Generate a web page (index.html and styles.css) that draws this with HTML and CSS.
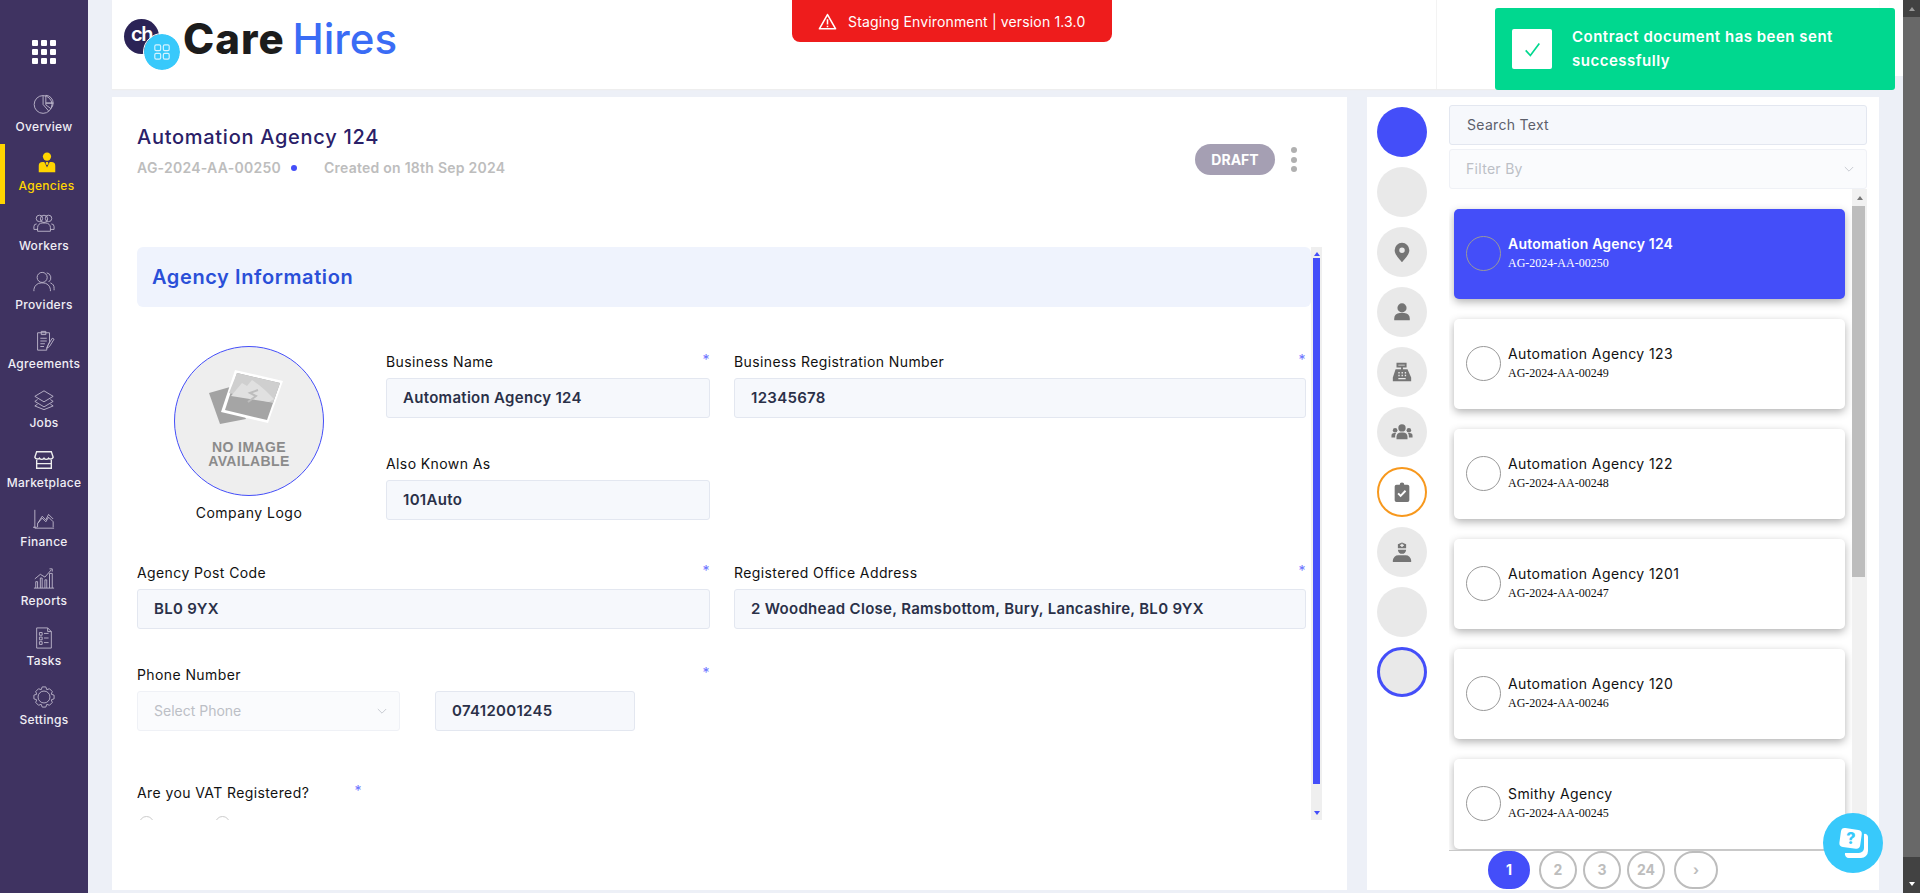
FILE: index.html
```html
<!DOCTYPE html>
<html lang="en">
<head>
    <meta charset="UTF-8">
    <title>Care Hires</title>
    <link rel="stylesheet" href="styles.css">
</head>
<body>
    <nav class="sidebar">
        <div class="apps-grid">
            <i></i><i></i><i></i><i></i><i></i><i></i><i></i><i></i><i></i>
        </div>
        <a class="nav-item">
            <svg viewBox="0 0 24 24"><circle cx="11" cy="12.500" r="9.700"/><path d="M14 2.500a8.500 8.500 0 0 1 8 8.500h-8zM14 11h8a8.500 8.500 0 0 1-2.500 6L14 13zM11 3v9.500l6 7"/></svg>
            <span>Overview</span>
        </a>
        <a class="nav-item active">
            <svg viewBox="0 0 24 24" class="filled"><circle cx="12" cy="5" r="4.500"/><path d="M3 22v-7a4 4 0 0 1 4-4h2l3 6 3-6h2a4 4 0 0 1 4 4v7z"/><path d="M11 11h2l.6 2-.6 1h-2l-.6-1z"/></svg>
            <span>Agencies</span>
        </a>
        <a class="nav-item">
            <svg viewBox="0 0 24 24"><circle cx="7" cy="7" r="3.500"/><circle cx="17" cy="7" r="3.500"/><circle cx="12" cy="7.500" r="4"/><path d="M4 13a3 3 0 0 0-3 3v3h4M20 13a3 3 0 0 1 3 3v3h-4M5 21v-4a5 5 0 0 1 5-5h4a5 5 0 0 1 5 5v4z"/></svg>
            <span>Workers</span>
        </a>
        <a class="nav-item">
            <svg viewBox="0 0 24 24"><circle cx="10" cy="7" r="5.500"/><path d="M1 22v-2a8 8 0 0 1 8-7h2a8 8 0 0 1 8 7v2M15 2a5.500 5.500 0 0 1 2 10M19 13a6 6 0 0 1 4 6v2"/></svg>
            <span>Providers</span>
        </a>
        <a class="nav-item">
            <svg viewBox="0 0 24 24"><path d="M5 3h13v10l-3 7v2H5zM9 1.500h5V5H9zM8 9h7M8 12h7M8 15h5M8 18h4M21 9l-5 8-1 3 3-2 5-8z"/></svg>
            <span>Agreements</span>
        </a>
        <a class="nav-item">
            <svg viewBox="0 0 24 24"><path d="M12 2l10 6-10 6L2 8zM5 11.500l-3 2 10 6 10-6-3-2M5 16.500l-3 2 10 4 10-4-3-2"/></svg>
            <span>Jobs</span>
        </a>
        <a class="nav-item">
            <svg viewBox="0 0 24 24" class="thick"><path d="M4 3h16l2 6a3 3 0 0 1-5 1 3 3 0 0 1-5 0 3 3 0 0 1-5 0 3 3 0 0 1-5-1zM4 12v9h16v-9M4 16h16"/></svg>
            <span>Marketplace</span>
        </a>
        <a class="nav-item">
            <svg viewBox="0 0 24 24"><path d="M2 2v20h21M0 21h4M5 17l5-8 4 4 3-6 5 5M5 21v-4l5-6 4 4 3-5 5 5v6"/></svg>
            <span>Finance</span>
        </a>
        <a class="nav-item">
            <svg viewBox="0 0 24 24"><path d="M1 23h22M3 23v-7h2v7M8 23V12h2v11M13 23V14h2v9M18 23V7h3v16M2 13l6-5 5 3 7-8M18 2l3 0v3"/></svg>
            <span>Reports</span>
        </a>
        <a class="nav-item">
            <svg viewBox="0 0 24 24"><path d="M4 1h12l4 4v18H4zM16 1v4h4M7 6h3v3H7zM7 11h3v3H7zM7 16h3v3H7zM12 7h5M12 12h5M12 17h5"/></svg>
            <span>Tasks</span>
        </a>
        <a class="nav-item">
            <svg viewBox="0 0 24 24"><circle cx="12" cy="12" r="6.500"/><path d="M10 1h4l1 3 3-1 3 3-1 3 3 1v4l-3 1 1 3-3 3-3-1-1 3h-4l-1-3-3 1-3-3 1-3-3-1v-4l3-1-1-3 3-3 3 1z"/></svg>
            <span>Settings</span>
        </a>
    </nav>

    <div class="main">
        <header class="top-bar">
            <div class="brand-bar">
                <div class="logo">
                    <div class="logo-marks">
                        <span class="mark-dark">ch</span>
                        <span class="mark-blue">
                            <svg viewBox="0 0 20 20"><rect x="2" y="2" width="6.500" height="6.500" rx="1.500"/><rect x="11.500" y="2" width="6.500" height="6.500" rx="1.500"/><rect x="2" y="11.500" width="6.500" height="6.500" rx="1.500"/><rect x="11.500" y="11.500" width="6.500" height="6.500" rx="1.500"/></svg>
                        </span>
                    </div>
                    <span class="logo-text"><b>Care</b> <em>Hires</em></span>
                </div>
                <div class="env-banner">
                    <svg viewBox="0 0 24 22"><path d="M12 2L1.500 20.500h21z"/><path d="M12 8v7M12 16.500v2"/></svg>
                    <span>Staging Environment | version 1.3.0</span>
                </div>
                <div class="bar-divider"></div>
            </div>
            <div class="bar-end"></div>
            <div class="toast">
                <div class="toast-check">
                    <svg viewBox="0 0 20 20"><path d="M2 11l5.500 6L18 3"/></svg>
                </div>
                <p>Contract document has been sent successfully</p>
            </div>
        </header>

        <div class="content">
            <section class="detail-panel">
                <div class="detail-head">
                    <div>
                        <h1>Automation Agency 124</h1>
                        <div class="detail-meta">
                            <span>AG-2024-AA-00250</span>
                            <i class="meta-dot"></i>
                            <span>Created on 18th Sep 2024</span>
                        </div>
                    </div>
                    <div class="detail-actions">
                        <span class="status-pill">DRAFT</span>
                        <div class="more-dots"><i></i><i></i><i></i></div>
                    </div>
                </div>

                <div class="form-scroll">
                    <h2 class="section-title">Agency Information</h2>

                    <div class="form-row first-row">
                        <div class="logo-cell">
                            <div class="logo-col">
                                <div class="logo-circle">
                                    <svg viewBox="0 0 76 56">
                                        <path class="photo-back" d="M1 24l21-6 16 32-26 5z"/>
                                        <path class="photo-frame" d="M27 1l48 11-15 42-47-11z"/>
                                        <path class="photo-band" d="M29 4l43 10-13 37-42-10z"/>
                                        <path class="photo-sky" d="M29 4l43 10-7 20-44-10z"/>
                                        <path class="photo-hill" d="M23 27l11-13 5 3 5-6 7 5 7 6 8 8-5 3z"/>
                                        <path class="photo-road" d="M40 33l8-6-6-3 8-3" />
                                    </svg>
                                    <div class="no-image">NO IMAGE<br>AVAILABLE</div>
                                </div>
                                <div class="logo-caption">Company Logo</div>
                            </div>
                            <div class="logo-fields">
                                <div class="field">
                                    <label>Business Name <s>*</s></label>
                                    <div class="input">Automation Agency 124</div>
                                </div>
                                <div class="field">
                                    <label>Also Known As</label>
                                    <div class="input">101Auto</div>
                                </div>
                            </div>
                        </div>
                        <div class="field">
                            <label>Business Registration Number <s>*</s></label>
                            <div class="input">12345678</div>
                        </div>
                    </div>

                    <div class="form-row address-row">
                        <div class="field">
                            <label>Agency Post Code <s>*</s></label>
                            <div class="input">BL0 9YX</div>
                        </div>
                        <div class="field">
                            <label>Registered Office Address <s>*</s></label>
                            <div class="input">2 Woodhead Close, Ramsbottom, Bury, Lancashire, BL0 9YX</div>
                        </div>
                    </div>

                    <div class="form-row phone-row">
                        <div class="field">
                            <label>Phone Number <s>*</s></label>
                            <div class="phone-inputs">
                                <div class="select phone-select">
                                    Select Phone
                                    <svg viewBox="0 0 12 8"><path d="M1 1l5 5 5-5"/></svg>
                                </div>
                                <div class="input phone-number">07412001245</div>
                            </div>
                        </div>
                    </div>

                    <div class="field vat-field">
                        <label>Are you VAT Registered? <s>*</s></label>
                        <div class="radios"><i></i><i></i></div>
                    </div>

                    <div class="form-scrollbar">
                        <i class="arrow-up"></i>
                        <div class="form-thumb"></div>
                        <i class="arrow-down"></i>
                    </div>
                </div>
            </section>

            <aside class="list-panel">
                <div class="step-rail">
                    <div class="step step-current"></div>
                    <div class="step"></div>
                    <div class="step">
                        <svg viewBox="0 0 24 24"><path fill-rule="evenodd" d="M12 2a8 8 0 0 0-8 8c0 5.500 8 13 8 13s8-7.500 8-13a8 8 0 0 0-8-8zm0 5a3 3 0 1 1 0 6 3 3 0 0 1 0-6z"/></svg>
                    </div>
                    <div class="step">
                        <svg viewBox="0 0 24 24"><circle cx="12" cy="7.500" r="5"/><path d="M3.500 21v-2a6 6 0 0 1 6-6h5a6 6 0 0 1 6 6v2z"/></svg>
                    </div>
                    <div class="step">
                        <svg viewBox="0 0 24 24"><path fill-rule="evenodd" d="M6 2h11v5h-4v2h5l4 9v4H2v-4l3-9h6V7H6zm2 2v1h7V4zm0 8v1.500h1.500V12zm3.500 0v1.500H13V12zm3.500 0v1.500h1.500V12zm-7 3v1.500h1.500V15zm3.500 0v1.500H13V15zm3.500 0v1.500h1.500V15zM8 18.500V20h8v-1.500z"/></svg>
                    </div>
                    <div class="step">
                        <svg viewBox="0 0 24 24"><circle cx="12" cy="7.500" r="4"/><circle cx="4.500" cy="10" r="2.500"/><circle cx="19.500" cy="10" r="2.500"/><path d="M6 20v-3a5 5 0 0 1 5-4.500h2a5 5 0 0 1 5 4.500v3zM0.500 18v-2a3 3 0 0 1 3-3h2a7 7 0 0 0-1 4v1zM23.500 18v-2a3 3 0 0 0-3-3h-2a7 7 0 0 1 1 4v1z"/></svg>
                    </div>
                    <div class="step step-pending">
                        <svg viewBox="0 0 24 24"><path fill-rule="evenodd" d="M6 4h3.500a2.500 2.500 0 0 1 5 0H18a2 2 0 0 1 2 2v15a2 2 0 0 1-2 2H6a2 2 0 0 1-2-2V6a2 2 0 0 1 2-2zm10.600 7.400l-1.500-1.500-4.600 4.800-2-2-1.500 1.500 3.500 3.500z"/></svg>
                    </div>
                    <div class="step">
                        <svg viewBox="0 0 24 24"><path fill-rule="evenodd" d="M7.500 3.500L12 1.500l4.500 2V8h-9zM11.200 3v1.200H10v1.200h1.200v1.200h1.600V5.400H14V4.200h-1.200V3z"/><path d="M7.500 9.500h9a4.500 4.500 0 0 1-9 0z"/><path d="M2 23v-2a6 6 0 0 1 6-5.500h8a6 6 0 0 1 6 5.500v2z"/></svg>
                    </div>
                    <div class="step"></div>
                    <div class="step step-selected"></div>
                </div>

                <div class="list-col">
                    <div class="search-box">Search Text</div>
                    <div class="select filter-select">
                        Filter By
                        <svg viewBox="0 0 12 8"><path d="M1 1l5 5 5-5"/></svg>
                    </div>
                    <div class="agency-list">
                        <div class="agency-card selected">
                            <i class="avatar"></i>
                            <div><h3>Automation Agency 124</h3><p>AG-2024-AA-00250</p></div>
                        </div>
                        <div class="agency-card">
                            <i class="avatar"></i>
                            <div><h3>Automation Agency 123</h3><p>AG-2024-AA-00249</p></div>
                        </div>
                        <div class="agency-card">
                            <i class="avatar"></i>
                            <div><h3>Automation Agency 122</h3><p>AG-2024-AA-00248</p></div>
                        </div>
                        <div class="agency-card">
                            <i class="avatar"></i>
                            <div><h3>Automation Agency 1201</h3><p>AG-2024-AA-00247</p></div>
                        </div>
                        <div class="agency-card">
                            <i class="avatar"></i>
                            <div><h3>Automation Agency 120</h3><p>AG-2024-AA-00246</p></div>
                        </div>
                        <div class="agency-card">
                            <i class="avatar"></i>
                            <div><h3>Smithy Agency</h3><p>AG-2024-AA-00245</p></div>
                        </div>
                        <div class="list-scrollbar">
                            <i class="arrow-up"></i>
                            <div class="list-thumb"></div>
                        </div>
                    </div>
                    <div class="pagination">
                        <span class="page current">1</span>
                        <span class="page">2</span>
                        <span class="page">3</span>
                        <span class="page">24</span>
                        <span class="page next">&rsaquo;</span>
                    </div>
                </div>
            </aside>
        </div>
    </div>

    <div class="page-scrollbar">
        <i class="arrow-up"></i>
        <div class="page-thumb"></div>
        <i class="arrow-down"></i>
    </div>

    <button class="help-btn">
        <svg viewBox="0 0 32 32">
            <path class="help-back" d="M27 7a3 3 0 0 1 4 3v14a7 7 0 0 1-7 7H12a4 4 0 0 1-4-5h14a5 5 0 0 0 5-5z"/>
            <rect class="help-front" x="3" y="2" width="21" height="19" rx="4" transform="rotate(8 14 12)"/>
            <text x="14" y="17" text-anchor="middle">?</text>
        </svg>
    </button>
</body>
</html>
```

FILE: styles.css
```css
* {
    box-sizing: border-box;
}
html, body {
    height: 100%;
}
body {
    margin: 0;
    height: 893px;
    overflow: hidden;
    display: flex;
    font-family: Inter, "Noto Sans", sans-serif;
    background-color: #edf0f7;
    color: #111;
    font-size: 14px;
}
i, em, s {
    font-style: normal;
    text-decoration: none;
}

/* left navigation */
.sidebar {
    width: 88px;
    flex: none;
    background-color: #3f3361;
    color: #f0eef5;
    padding-top: 40px;
}
.apps-grid {
    width: 24px;
    margin: 0 0 21px 32px;
    display: grid;
    grid-template-columns: repeat(3, 6px);
    gap: 3px;
}
.apps-grid i {
    height: 6px;
    background-color: #fff;
    border-radius: 1px;
}
.nav-item {
    height: 59.300px;
    display: flex;
    flex-direction: column;
    align-items: center;
    padding-top: 8px;
    font-size: 12px;
    font-weight: 500;
    letter-spacing: 0.300px;
    border-left: 5px solid transparent;
    padding-right: 5px;
}
.nav-item svg {
    width: 22px;
    height: 22px;
    flex: none;
    fill: none;
    stroke: #bdb7cc;
    stroke-width: 1;
    margin-bottom: 2px;
}
.nav-item svg.thick {
    stroke: #eee;
    stroke-width: 1.500;
}
.nav-item span {
    line-height: 20px;
    white-space: nowrap;
}
.nav-item.active {
    border-left-color: #ffd500;
    color: #ffd500;
    padding-right: 0;
}
.nav-item.active svg.filled {
    fill: #ffd500;
    stroke: none;
}

/* header */
.main {
    width: 1815px;
    flex: none;
    padding-left: 24px;
}
.top-bar {
    display: flex;
    height: 89px;
    align-items: flex-start;
    position: relative;
}
.brand-bar {
    flex: 1;
    height: 89px;
    background-color: #fff;
    box-shadow: 0 1px 1px #eee;
    position: relative;
    padding: 19px 0 0 12px;
}
.bar-end {
    width: 24px;
    height: 76px;
    background-color: #fff;
}
.bar-divider {
    position: absolute;
    left: 1324px;
    top: 0;
    bottom: 0;
    width: 1px;
    background-color: #f3f3f3;
}
.logo {
    display: flex;
    align-items: flex-start;
}
.logo-marks {
    width: 59px;
    height: 51px;
    position: relative;
    flex: none;
}
.mark-dark {
    position: absolute;
    left: 0;
    top: 0;
    width: 35px;
    height: 35px;
    border-radius: 50%;
    background-color: #2b2356;
    color: #fff;
    font-size: 20px;
    font-weight: 600;
    line-height: 30px;
    text-align: center;
    letter-spacing: -1.500px;
}
.mark-blue {
    position: absolute;
    left: 20px;
    top: 15px;
    width: 36px;
    height: 36px;
    border-radius: 50%;
    background-color: #38c9fb;
    outline: 1px solid #fff;
    display: flex;
    align-items: center;
    justify-content: center;
}
.mark-blue svg {
    width: 18px;
    height: 18px;
    fill: none;
    stroke: #d5f3ff;
    stroke-width: 1.300;
}
.logo-text {
    font-size: 42px;
    line-height: 30px;
    margin-top: 5px;
    white-space: nowrap;
}
.logo-text b {
    font-weight: 800;
    color: #1c1c1c;
    letter-spacing: 1px;
}
.logo-text em {
    font-weight: 500;
    color: #3a6cf5;
    margin-left: -4px;
}
.env-banner {
    position: absolute;
    left: 680px;
    top: 0;
    width: 320px;
    height: 42px;
    background-color: #ee1c1c;
    border-radius: 0 0 8px 8px;
    color: #fff;
    display: flex;
    align-items: center;
    padding-left: 26px;
    gap: 11px;
    font-size: 14px;
    letter-spacing: 0.150px;
}
.env-banner svg {
    width: 19px;
    height: 17px;
    fill: none;
    stroke: #fff;
    stroke-width: 2;
    stroke-linejoin: round;
}
.toast {
    position: absolute;
    left: 1383px;
    top: 8px;
    width: 400px;
    height: 82px;
    background-color: #00d88f;
    border-radius: 3px;
    display: flex;
    align-items: flex-start;
    padding: 21px 17px;
    gap: 20px;
    color: #fff;
    font-size: 15px;
    font-weight: 600;
    line-height: 24px;
    letter-spacing: 0.500px;
}
.toast-check {
    width: 40px;
    height: 40px;
    flex: none;
    background-color: #fff;
    border-radius: 2px;
    display: flex;
    align-items: center;
    justify-content: center;
}
.toast-check svg {
    width: 17px;
    height: 17px;
    fill: none;
    stroke: #00d88f;
    stroke-width: 2;
}
.toast p {
    margin: -4px 0 0;
}

/* content panels */
.content {
    display: flex;
    gap: 20px;
    margin-top: 8px;
    height: 793px;
}
.detail-panel {
    width: 1235px;
    flex: none;
    background-color: #fff;
    padding: 0 25px;
}
.detail-head {
    height: 150px;
    display: flex;
    justify-content: space-between;
    padding-top: 26px;
}
h1 {
    margin: 0;
    font-size: 20px;
    font-weight: 500;
    line-height: 28px;
    color: #2a2068;
    letter-spacing: 0.720px;
}
.detail-meta {
    display: flex;
    align-items: center;
    margin-top: 7px;
    color: #bdbdbd;
    font-size: 14px;
    font-weight: 600;
    line-height: 20px;
    letter-spacing: 0.250px;
}
.meta-dot {
    width: 6px;
    height: 6px;
    border-radius: 50%;
    background-color: #444ef9;
    margin: 0 27px 0 10px;
}
.detail-actions {
    display: flex;
    align-items: flex-start;
    gap: 16px;
    padding: 21px 25px 0 0;
}
.status-pill {
    width: 80px;
    height: 31px;
    border-radius: 16px;
    background-color: #a59fb3;
    color: #fff;
    font-weight: 700;
    line-height: 31px;
    text-align: center;
}
.more-dots {
    display: flex;
    flex-direction: column;
    gap: 3.500px;
    padding-top: 3px;
}
.more-dots i {
    width: 6px;
    height: 6px;
    border-radius: 50%;
    background-color: #b0b0b0;
}

/* form */
.form-scroll {
    width: 1185px;
    height: 573px;
    overflow: hidden;
    position: relative;
}
.section-title {
    margin: 0 11px 0 0;
    height: 60px;
    padding-left: 15px;
    background-color: #eff3fd;
    border-radius: 6px;
    color: #2a4fd8;
    font-size: 20px;
    font-weight: 600;
    line-height: 60px;
    letter-spacing: 0.600px;
}
.form-row {
    display: grid;
    grid-template-columns: 573px 572px;
    gap: 24px;
}
.first-row {
    margin-top: 45px;
}
.address-row {
    margin-top: 43px;
}
.phone-row {
    margin-top: 36px;
}
.logo-cell {
    display: flex;
    gap: 25px;
}
.logo-col {
    width: 224px;
    height: 168px;
    flex: none;
    margin-top: -6px;
    display: flex;
    flex-direction: column;
    align-items: center;
}
.logo-circle {
    width: 150px;
    height: 150px;
    flex: none;
    border-radius: 50%;
    border: 1px solid #444ef9;
    background-color: #eee;
    display: flex;
    flex-direction: column;
    align-items: center;
    padding-top: 22px;
}
.logo-circle svg {
    width: 76px;
    height: 56px;
    flex: none;
    margin-left: -6px;
}
.photo-back {
    fill: #a3a3a3;
}
.photo-frame {
    fill: #fff;
}
.photo-band {
    fill: #a5a5a5;
}
.photo-sky {
    fill: #cfcfcf;
}
.photo-hill {
    fill: #e0e0e0;
}
.photo-road {
    fill: none;
    stroke: #bdbdbd;
    stroke-width: 2;
}
.no-image {
    margin-top: 15px;
    color: #8b8b8b;
    font-family: "Liberation Sans", sans-serif;
    font-size: 14px;
    font-weight: 700;
    line-height: 14px;
    text-align: center;
    letter-spacing: 0.400px;
}
.logo-caption {
    margin-top: 7px;
    line-height: 20px;
    letter-spacing: 0.500px;
}
.logo-fields {
    width: 324px;
    display: flex;
    flex-direction: column;
    gap: 36px;
}
.field label {
    display: flex;
    justify-content: space-between;
    height: 20px;
    line-height: 20px;
    margin-bottom: 6px;
    letter-spacing: 0.400px;
}
.field label s {
    color: #6a73ff;
    line-height: 16px;
}
.input {
    height: 40px;
    padding: 0 16px;
    background-color: #f6f8fc;
    border: 1px solid #e3e7f0;
    border-radius: 3px;
    color: #2a3048;
    font-size: 15px;
    font-weight: 600;
    line-height: 38px;
    white-space: nowrap;
    letter-spacing: 0.300px;
}
.select {
    height: 40px;
    padding: 0 12px 0 16px;
    background-color: #fafbfd;
    border: 1px solid #eff1f6;
    border-radius: 3px;
    color: #bcbfc6;
    line-height: 38px;
    display: flex;
    justify-content: space-between;
    align-items: center;
}
.select svg {
    width: 10px;
    height: 7px;
    fill: none;
    stroke: #c8cbd2;
    stroke-width: 1.200;
}
.phone-inputs {
    display: flex;
    gap: 35px;
}
.phone-select {
    width: 263px;
}
.phone-number {
    width: 200px;
}
.vat-field {
    margin-top: 52px;
}
.vat-field label {
    width: 225px;
}
.radios {
    display: flex;
    gap: 61px;
    margin: 13px 0 0 2px;
}
.radios i {
    width: 15px;
    height: 15px;
    border: 1px solid #ccc;
    border-radius: 50%;
}
.form-scrollbar {
    position: absolute;
    right: 0;
    top: 0;
    bottom: 0;
    width: 11px;
    background-color: #efefef;
    display: flex;
    flex-direction: column;
    align-items: center;
    padding: 5px 0;
}
.form-thumb {
    flex: 1;
    width: 7px;
    margin: 2px 0 27px;
    background-color: #444ef9;
}
.form-scrollbar .arrow-up {
    border-bottom-color: #444ef9;
}
.form-scrollbar .arrow-down {
    border-top-color: #444ef9;
}
.arrow-up, .arrow-down {
    width: 0;
    height: 0;
    border-left: 3px solid transparent;
    border-right: 3px solid transparent;
    flex: none;
}
.arrow-up {
    border-bottom: 4px solid #777;
}
.arrow-down {
    border-top: 4px solid #777;
}

/* agencies list */
.list-panel {
    width: 512px;
    flex: none;
    background-color: #fff;
    display: flex;
    gap: 22px;
    padding: 8px 12px 0 10px;
}
.step-rail {
    width: 50px;
    flex: none;
    padding-top: 2px;
    display: flex;
    flex-direction: column;
    gap: 10px;
}
.step {
    width: 50px;
    height: 50px;
    border-radius: 50%;
    background-color: #e9e9e9;
    display: flex;
    align-items: center;
    justify-content: center;
}
.step svg {
    width: 22px;
    height: 22px;
    fill: #757575;
}
.step-current {
    background-color: #444ef9;
}
.step-pending {
    background-color: #fff;
    border: 2px solid #f7981d;
}
.step-selected {
    border: 3px solid #444ef9;
}
.list-col {
    flex: 1;
    min-width: 0;
}
.search-box {
    height: 40px;
    padding: 0 17px;
    background-color: #f6f8fc;
    border: 1px solid #e3e7f0;
    border-radius: 3px;
    color: #5c5f6b;
    line-height: 38px;
    letter-spacing: 0.300px;
}
.filter-select {
    margin-top: 4px;
    letter-spacing: 0.300px;
}
.agency-list {
    height: 662px;
    overflow: hidden;
    position: relative;
    padding: 20px 0 0 5px;
    border-bottom: 1px solid #c9c9c9;
}
.agency-card {
    width: 391px;
    height: 90px;
    margin-bottom: 20px;
    background-color: #fff;
    border-radius: 5px;
    box-shadow: 0 3px 8px rgba(0, 0, 0, 0.3);
    padding: 27px 0 0 12px;
    display: flex;
    gap: 7px;
}
.agency-card.selected {
    background-color: #444ef9;
    color: #fff;
}
.avatar {
    width: 35px;
    height: 35px;
    flex: none;
    border: 1px solid #999;
    border-radius: 50%;
}
.agency-card h3 {
    margin: 0;
    font-size: 14px;
    font-weight: 400;
    line-height: 16px;
    letter-spacing: 0.400px;
}
.agency-card.selected h3 {
    font-weight: 600;
    letter-spacing: 0.200px;
}
.agency-card p {
    margin: 3px 0 0;
    font-family: "Liberation Serif", serif;
    font-size: 12px;
    line-height: 16px;
}
.list-scrollbar {
    position: absolute;
    right: 0;
    top: 0;
    bottom: 0;
    width: 15px;
    background-color: #f1f1f1;
    display: flex;
    flex-direction: column;
    align-items: center;
    padding-top: 7px;
}
.list-thumb {
    width: 13px;
    height: 371px;
    margin-top: 6px;
    margin-left: -2px;
    background-color: #bdbdbd;
}
.pagination {
    display: flex;
    margin-left: 39px;
    gap: 6px;
}
.page {
    width: 38px;
    height: 38px;
    border: 2px solid #bdbdbd;
    border-radius: 19px;
    color: #bdbdbd;
    font-weight: 700;
    line-height: 34px;
    text-align: center;
}
.page.current {
    width: 42px;
    margin-right: 3px;
    background-color: #444ef9;
    border-color: #444ef9;
    color: #fff;
}
.page.next {
    width: 44px;
    margin-left: 3px;
}

/* window scrollbar and floating help */
.page-scrollbar {
    width: 17px;
    flex: none;
    height: 893px;
    background-color: #424242;
    display: flex;
    flex-direction: column;
    align-items: center;
    padding: 7px 0;
}
.page-scrollbar .arrow-up {
    border-bottom-color: #9a9a9a;
}
.page-scrollbar .arrow-down {
    border-top-color: #fff;
}
.page-thumb {
    flex: 1;
    width: 17px;
    margin: 6px 0 25px;
    background-color: #686868;
}
.help-btn {
    position: absolute;
    left: 1823px;
    top: 813px;
    width: 60px;
    height: 60px;
    padding: 0;
    border: 0;
    border-radius: 50%;
    background-color: #38c9fb;
    display: flex;
    align-items: center;
    justify-content: center;
}
.help-btn svg {
    width: 32px;
    height: 32px;
}
.help-back, .help-front {
    fill: #fff;
}
.help-btn text {
    fill: #38c9fb;
    font-family: Inter, sans-serif;
    font-size: 16px;
    font-weight: 800;
}
```
